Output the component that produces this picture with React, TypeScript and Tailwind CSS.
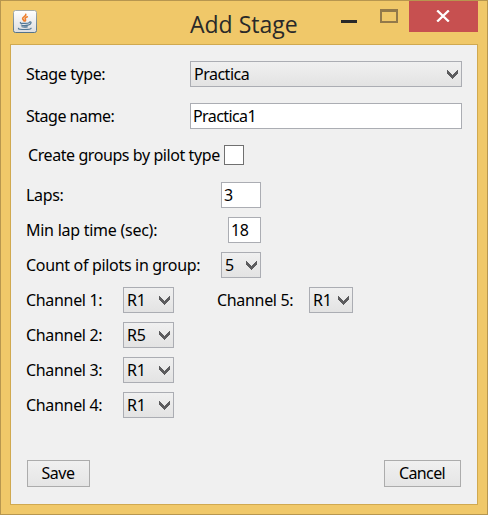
import type { ReactNode } from "react";

const FIELD = "h-[26px] border border-[#abadb3] box-border flex items-center leading-none";

function Chevron() {
  return (
    <svg width="11" height="9" viewBox="0 0 11 9" shapeRendering="crispEdges" className="mt-px shrink-0">
      <path d="M0 0h1v1h1v1h1v1h1v1h1v1h1v-1h1v-1h1v-1h1v-1h1v-1h1v4h-1v1h-1v1h-1v1h-1v1h-1v1h-1v-1h-1v-1h-1v-1h-1v-1h-1v-1h-1z" fill="#5c5c5e" />
    </svg>
  );
}

function Select({ value, className }: { value: string; className: string }) {
  return (
    <button className={`${FIELD} justify-between bg-linear-to-b from-[#f0f0f0] to-[#e3e3e3] pl-[3px] pr-[3px] ${className}`}>
      <span>{value}</span>
      <Chevron />
    </button>
  );
}

function Row({ className = "", children }: { className?: string; children: ReactNode }) {
  return <div className={`flex h-[26px] items-center leading-none ${className}`}>{children}</div>;
}

function JavaIcon() {
  return (
    <svg width="24" height="23" viewBox="0 0 24 23">
      <defs>
        <linearGradient id="tile" x1="0" y1="0" x2="0" y2="1">
          <stop offset="0" stopColor="#ffffff" />
          <stop offset="1" stopColor="#dcdde0" />
        </linearGradient>
        <linearGradient id="edge" x1="0" y1="0" x2="0" y2="1">
          <stop offset="0" stopColor="#a7adaa" />
          <stop offset="1" stopColor="#55738b" />
        </linearGradient>
      </defs>
      <rect x="0.5" y="0.5" width="23" height="22" rx="2" fill="url(#tile)" stroke="url(#edge)" />
      <g fill="none" strokeLinecap="round">
        <path d="M12.8 4.300c.7 2-3.500 2.600-3.200 4.400.1.900 1.300 1.400 1.500 2.300M14.300 6.800c-2 .8-2.600 1.700-1.900 2.600.4.600.3 1-.2 1.500" stroke="#ee7f2d" strokeWidth="1.600" />
        <path d="M7.500 12.500c-1 .8 1 1 4.300.9 2 0 3.700-.2 4.400-.7M8.300 15c1.500.7 4.700.6 6.600.1M8.900 16.800c1.600.5 3.800.4 5.400.1M16.500 12c2.300-.6 2 2.200-.7 2.900M5.500 18.300c-.6.900 2.600 1.200 6.300 1.200 3.500 0 6-.4 6.300-1.300" stroke="#537896" strokeWidth="1.200" />
      </g>
    </svg>
  );
}

function TitleBar() {
  return (
    <header className="flex h-[43px] items-start pl-3">
      <div className="mt-[9px] w-6"><JavaIcon /></div>
      <h1 className="ml-[153px] mt-[7px] w-[130px] whitespace-nowrap font-['Open_Sans',sans-serif] text-[23px] leading-8 text-[#292929]">Add Stage</h1>
      <button aria-label="Minimize" className="ml-[21px] mt-[19px] h-[3px] w-4 bg-[#292929]" />
      <button aria-label="Maximize" className="ml-[23px] mt-2 h-[14px] w-[18px] border-2 border-t-[3px] border-[#92794a]" />
      <button aria-label="Close" className="ml-[11px] flex h-[31px] w-[69px] bg-[#c75050] pl-[27px] pt-[9px]">
        <svg width="14" height="12" viewBox="0 0 14 12">
          <path d="M1.200.500l11.600 11M12.800.500l-11.600 11" stroke="#fff" strokeWidth="2.300" />
        </svg>
      </button>
    </header>
  );
}

function Channel({ n, value }: { n: number; value: string }) {
  return (
    <Row>
      <span className="w-[97px]">Channel {n}:</span>
      <Select value={value} className="w-[51px]" />
      {n === 1 && (
        <>
          <span className="ml-[43px] w-[92px]">Channel 5:</span>
          <Select value="R1" className="w-[44px]" />
        </>
      )}
    </Row>
  );
}

const CHANNELS = ["R1", "R5", "R1", "R1"];

export default function App() {
  return (
    <div className="h-[515px] w-[488px] border border-[#b7964f] bg-[#f0c869]">
      <TitleBar />
      <main className="mx-[9px] flex h-[461px] flex-col border border-[#d0a950] bg-[#f0f0f0] pl-[15px] pr-[15px] pt-4 font-['Noto_Sans',sans-serif] text-[16px] tracking-[-0.32px] whitespace-nowrap text-black">
        <Row>
          <span className="w-[164px] tracking-[-0.4px]">Stage type:</span>
          <Select value="Practica" className="w-[272px] tracking-[-0.5px]" />
        </Row>
        <Row className="mt-4">
          <span className="w-[164px] tracking-[-0.5px]">Stage name:</span>
          <div className={`${FIELD} w-[272px] bg-white pl-[2px] tracking-[-0.6px]`}>Practica1</div>
        </Row>
        <Row className="mt-[13px] pl-[2px]">
          <span className="w-[196px] tracking-[-0.42px]">Create groups by pilot type</span>
          <span className="size-5 border border-[#707070] bg-white" />
        </Row>
        <Row className="mt-[14px]">
          <span className="w-[195px]">Laps:</span>
          <div className={`${FIELD} w-10 bg-white pl-[2px]`}>3</div>
        </Row>
        <Row className="mt-[9px]">
          <span className="w-[202px] tracking-[-0.26px]">Min lap time (sec):</span>
          <div className={`${FIELD} w-[33px] bg-white pl-[2px]`}>18</div>
        </Row>
        <Row className="mt-[9px]">
          <span className="w-[195px]">Count of pilots in group:</span>
          <Select value="5" className="w-10" />
        </Row>
        <div className="mt-[9px] flex flex-col gap-[9px]">
          {CHANNELS.map((value, i) => <Channel key={i} n={i + 1} value={value} />)}
        </div>
        <footer className="mt-[42px] flex justify-between pl-px pr-px leading-none tracking-[-0.6px]">
          <button className="h-[27px] w-[63px] border border-[#acacac] bg-linear-to-b from-[#f0f0f0] to-[#e5e5e5] pb-[2px] pr-px tracking-[-0.5px]">Save</button>
          <button className="h-[27px] w-[77px] border border-[#acacac] bg-linear-to-b from-[#f0f0f0] to-[#e5e5e5] pb-[2px] pr-px">Cancel</button>
        </footer>
      </main>
    </div>
  );
}
